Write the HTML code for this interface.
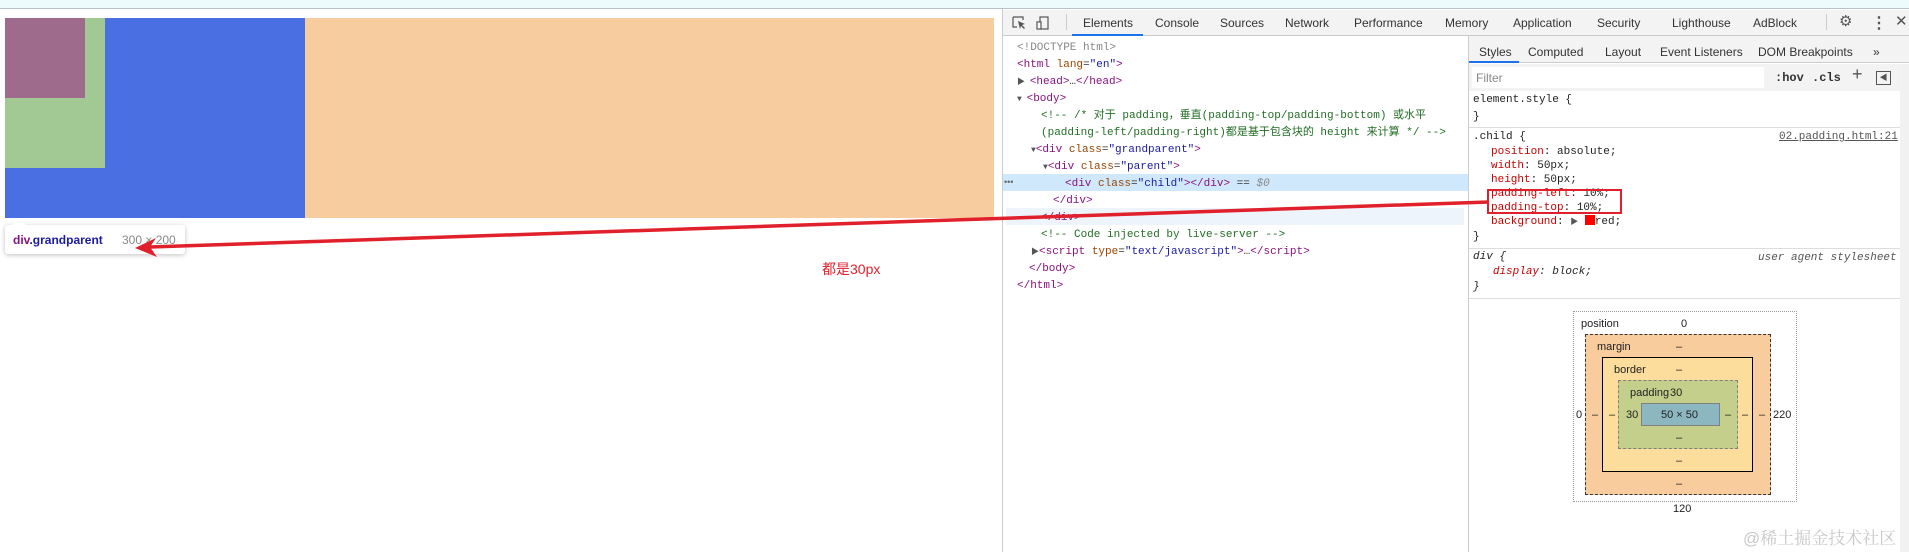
<!DOCTYPE html>
<html><head><meta charset="utf-8">
<style>
*{margin:0;padding:0;box-sizing:border-box}
body{width:1909px;height:552px;position:relative;overflow:hidden;background:#fff;font-family:"Liberation Sans","Noto Sans CJK SC",sans-serif;font-size:12px;color:#333}
.a{position:absolute;white-space:nowrap}
.m{font-family:"Liberation Mono","Noto Sans CJK SC",monospace;font-size:11px;line-height:17px}
.tg{color:#881280}.at{color:#994500}.av{color:#1a1aa6}.cm{color:#236e25}.gr{color:#888}
.pn{color:#c80000}
.tab{position:absolute;top:16px;color:#333;font-size:12px}
.st{position:absolute;top:45px;color:#333;font-size:12px}
.lbl{position:absolute;font-size:11px;color:#222;font-family:"Liberation Sans",sans-serif}
</style></head><body>
<div class="a" style="left:0;top:0;width:1909px;height:9px;background:#eefbfd;border-bottom:1px solid #b8c4c8"></div>
<div class="a" style="left:5px;top:18px;width:300px;height:200px;background:#4a6fe3"></div>
<div class="a" style="left:5px;top:18px;width:100px;height:150px;background:#a2c894"></div>
<div class="a" style="left:5px;top:18px;width:80px;height:80px;background:#9e6b8c"></div>
<div class="a" style="left:305px;top:18px;width:689px;height:200px;background:#f7cc9e"></div>
<div class="a" style="left:5px;top:225px;width:180px;height:29px;background:#fff;border-radius:3px;box-shadow:0 1px 5px rgba(0,0,0,.25)"></div>
<div class="a" style="left:12px;top:218px;width:0;height:0;border-left:7px solid transparent;border-right:7px solid transparent;border-bottom:7px solid #fff"></div>
<div class="a" style="left:13px;top:233px;font-size:12px;font-weight:bold;color:#881280">div<span style="color:#1a1aa6">.grandparent</span></div>
<div class="a" style="left:122px;top:233px;font-size:12px;color:#888">300 × 200</div>
<div class="a" style="left:822px;top:259px;font-size:14px;color:#e0202b">都是30px</div>
<div class="a" style="left:1002px;top:9px;width:907px;height:543px;background:#fff;border-left:1px solid #ccc"></div>
<div class="a" style="left:1003px;top:10px;width:906px;height:26px;background:#f3f3f3;border-bottom:1px solid #ccc"></div>
<svg class="a" style="left:1012px;top:15px" width="42" height="16" viewBox="0 0 42 16"><path d="M1 2h10v3M1 2v10h4" fill="none" stroke="#555" stroke-width="1.2"/><path d="M6 6l7 3-3 1 3 3-1 1-3-3-1 3z" fill="#555"/><rect x="28" y="2" width="8" height="12" fill="none" stroke="#555" stroke-width="1.2"/><rect x="25" y="7" width="4" height="7" fill="#fff" stroke="#555" stroke-width="1.2"/></svg>
<div class="a" style="left:1066px;top:14px;width:1px;height:16px;background:#ccc"></div>
<div class="tab" style="left:1083px">Elements</div>
<div class="a" style="left:1072px;top:34px;width:71px;height:2px;background:#1a73e8"></div>
<div class="tab" style="left:1155px">Console</div>
<div class="tab" style="left:1220px">Sources</div>
<div class="tab" style="left:1285px">Network</div>
<div class="tab" style="left:1354px">Performance</div>
<div class="tab" style="left:1445px">Memory</div>
<div class="tab" style="left:1513px">Application</div>
<div class="tab" style="left:1597px">Security</div>
<div class="tab" style="left:1672px">Lighthouse</div>
<div class="tab" style="left:1753px">AdBlock</div>
<div class="a" style="left:1826px;top:14px;width:1px;height:16px;background:#ccc"></div>
<div class="a" style="left:1839px;top:12px;font-size:15px;color:#555">⚙</div>
<div class="a" style="left:1871px;top:13px;font-size:16px;color:#555;font-weight:bold">⋮</div>
<div class="a" style="left:1895px;top:12px;font-size:15px;color:#555">✕</div>
<div class="a" style="left:1003px;top:174px;width:465px;height:17px;background:#cfe8fc"></div>
<div class="a" style="left:1006px;top:208px;width:458px;height:17px;background:#eef4fb"></div>
<div class="a m" style="left:1017px;top:40px">
<div class="gr">&lt;!DOCTYPE html&gt;</div>
<div><span class="tg">&lt;html</span> <span class="at">lang</span>=<span class="av">"en"</span><span class="tg">&gt;</span></div>
<div><span style="font-size:8px;color:#555">▶ </span><span class="tg">&lt;head&gt;</span>…<span class="tg">&lt;/head&gt;</span></div>
<div><span style="font-size:8px;color:#555">▼ </span><span class="tg">&lt;body&gt;</span></div>
<div class="cm" style="padding-left:24px">&lt;!-- /*  对于 padding，垂直(padding-top/padding-bottom) 或水平</div>
<div class="cm" style="padding-left:24px">(padding-left/padding-right)都是基于包含块的 height 来计算  */ --&gt;</div>
<div style="padding-left:14px"><span style="font-size:8px;color:#555">▼</span><span class="tg">&lt;div</span> <span class="at">class</span>=<span class="av">"grandparent"</span><span class="tg">&gt;</span></div>
<div style="padding-left:26px"><span style="font-size:8px;color:#555">▼</span><span class="tg">&lt;div</span> <span class="at">class</span>=<span class="av">"parent"</span><span class="tg">&gt;</span></div>
<div style="padding-left:48px"><span class="tg">&lt;div</span> <span class="at">class</span>=<span class="av">"child"</span><span class="tg">&gt;&lt;/div&gt;</span> == <i class="gr">$0</i></div>
<div style="padding-left:36px" class="tg">&lt;/div&gt;</div>
<div style="padding-left:24px" class="tg">&lt;/div&gt;</div>
<div class="cm" style="padding-left:24px">&lt;!-- Code injected by live-server --&gt;</div>
<div style="padding-left:14px"><span style="font-size:8px;color:#555">▶</span><span class="tg">&lt;script</span> <span class="at">type</span>=<span class="av">"text/javascript"</span><span class="tg">&gt;</span>…<span class="tg">&lt;/script&gt;</span></div>
<div style="padding-left:12px" class="tg">&lt;/body&gt;</div>
<div class="tg">&lt;/html&gt;</div>
</div>
<div class="a" style="left:1004px;top:177px;font-size:9px;color:#666">•••</div>
<div class="a" style="left:1468px;top:36px;width:441px;height:516px;background:#fff;border-left:1px solid #ccc"></div>
<div class="a" style="left:1469px;top:36px;width:440px;height:27px;background:#f3f3f3;border-bottom:1px solid #ccc"></div>
<div class="st" style="left:1479px">Styles</div>
<div class="a" style="left:1469px;top:61px;width:50px;height:2px;background:#1a73e8"></div>
<div class="st" style="left:1528px">Computed</div>
<div class="st" style="left:1605px">Layout</div>
<div class="st" style="left:1660px">Event Listeners</div>
<div class="st" style="left:1758px">DOM Breakpoints</div>
<div class="st" style="left:1873px">»</div>
<div class="a" style="left:1469px;top:64px;width:431px;height:27px;background:#f3f3f3"></div>
<div class="a" style="left:1472px;top:67px;width:292px;height:21px;background:#fff"></div>
<div class="a" style="left:1476px;top:71px;color:#888">Filter</div>
<div class="a" style="left:1775px;top:71px;font-family:'Liberation Mono',monospace;font-weight:bold;color:#333">:hov</div>
<div class="a" style="left:1812px;top:71px;font-family:'Liberation Mono',monospace;font-weight:bold;color:#333">.cls</div>
<div class="a" style="left:1852px;top:64px;font-size:18px;color:#555">+</div>
<div class="a" style="left:1876px;top:71px;width:15px;height:14px;border:1px solid #555;font-size:8px;line-height:12px;color:#555;text-align:center">◀</div>
<div class="a" style="left:1900px;top:64px;width:9px;height:488px;background:#f1f1f1"></div>
<div class="a m" style="left:1473px;top:92px;color:#222">element.style {<br>}</div>
<div class="a" style="left:1469px;top:127px;width:431px;height:1px;background:#ddd"></div>
<div class="a m" style="left:1473px;top:129px;color:#222">.child {</div>
<div class="a m" style="left:1779px;top:129px;color:#555;text-decoration:underline">02.padding.html:21</div>
<div class="a m" style="left:1491px;top:145px;color:#222;line-height:14px">
<div><span class="pn">position</span>: absolute;</div>
<div><span class="pn">width</span>: 50px;</div>
<div><span class="pn">height</span>: 50px;</div>
<div><span class="pn">padding-left</span>: 10%;</div>
<div><span class="pn">padding-top</span>: 10%;</div>
<div><span class="pn">background</span>: <span style="font-size:8px;color:#555">▶</span> <span style="display:inline-block;width:10px;height:10px;background:red;vertical-align:-1px"></span>red;</div>
</div>
<div class="a m" style="left:1473px;top:229px;color:#222">}</div>
<div class="a" style="left:1487px;top:189px;width:135px;height:25px;border:2px solid #e0202b"></div>
<div class="a" style="left:1469px;top:248px;width:431px;height:1px;background:#ddd"></div>
<div class="a m" style="left:1473px;top:250px;color:#222;font-style:italic;line-height:15px">div {<br>&nbsp;&nbsp;&nbsp;<span class="pn">display</span>: block;<br>}</div>
<div class="a m" style="left:1758px;top:250px;color:#555;font-style:italic">user agent stylesheet</div>
<div class="a" style="left:1469px;top:298px;width:431px;height:1px;background:#ddd"></div>
<div class="a" style="left:1573px;top:311px;width:224px;height:191px;border:1px dotted #999"></div>
<div class="a" style="left:1585px;top:334px;width:186px;height:161px;background:#f9cc9d;border:1px dashed #333"></div>
<div class="a" style="left:1602px;top:357px;width:151px;height:115px;background:#fddd9b;border:1px solid #000"></div>
<div class="a" style="left:1618px;top:380px;width:120px;height:69px;background:#c3cf8a;border:1px dashed #808080"></div>
<div class="a" style="left:1641px;top:403px;width:79px;height:23px;background:#8cb6c0;border:1px solid #808080"></div>
<div class="lbl" style="left:1581px;top:318px">position</div>
<div class="lbl" style="left:1681px;top:318px">0</div>
<div class="lbl" style="left:1597px;top:341px">margin</div>
<div class="lbl" style="left:1676px;top:341px">–</div>
<div class="lbl" style="left:1614px;top:364px">border</div>
<div class="lbl" style="left:1676px;top:364px">–</div>
<div class="lbl" style="left:1630px;top:387px">padding</div>
<div class="lbl" style="left:1670px;top:387px">30</div>
<div class="lbl" style="left:1626px;top:409px">30</div>
<div class="lbl" style="left:1661px;top:409px">50 × 50</div>
<div class="lbl" style="left:1576px;top:409px">0</div>
<div class="lbl" style="left:1592px;top:409px">–</div>
<div class="lbl" style="left:1609px;top:409px">–</div>
<div class="lbl" style="left:1725px;top:409px">–</div>
<div class="lbl" style="left:1742px;top:409px">–</div>
<div class="lbl" style="left:1759px;top:409px">–</div>
<div class="lbl" style="left:1773px;top:409px">220</div>
<div class="lbl" style="left:1676px;top:432px">–</div>
<div class="lbl" style="left:1676px;top:455px">–</div>
<div class="lbl" style="left:1676px;top:478px">–</div>
<div class="lbl" style="left:1673px;top:503px">120</div>
<div class="a" style="left:1743px;top:524px;font-size:17px;color:#c8c8c8;font-family:'Liberation Sans','Noto Serif CJK SC',sans-serif">@稀土掘金技术社区</div>
<svg class="a" style="left:0;top:0" width="1909" height="552"><line x1="1489" y1="202" x2="150" y2="247" stroke="#e0202b" stroke-width="3.5"/><path d="M135 248 L156 238 L150 247 L157 257 Z" fill="#e0202b"/></svg>
</body></html>
